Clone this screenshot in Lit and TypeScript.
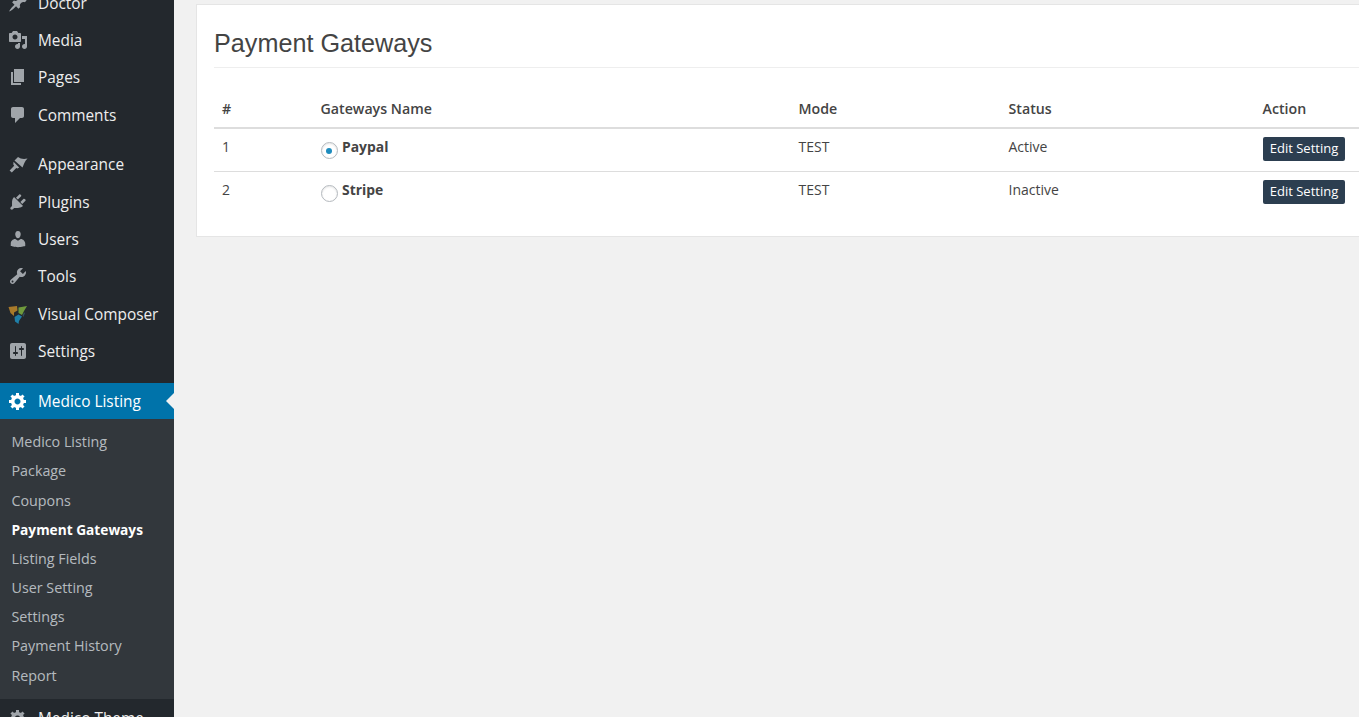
import { LitElement, html, css, svg } from 'lit';
import { customElement } from 'lit/decorators.js';

const ICONS: Record<string, string> = {
  pin: 'M10.44 3.02l1.82-1.82 6.36 6.35-1.83 1.82c-1.05-.68-2.48-.57-3.41.36l-.75.75c-.92.93-1.04 2.35-.35 3.41l-1.83 1.82-2.41-2.41-2.8 2.79c-.42.42-3.38 2.71-3.8 2.29s1.86-3.39 2.28-3.81l2.79-2.79L4.1 9.36l1.83-1.82c1.05.69 2.48.57 3.4-.36l.75-.75c.93-.92 1.05-2.35.36-3.41z',
  media: 'M13 11V4c0-.55-.45-1-1-1h-1.67L9 1H5L3.67 3H2c-.55 0-1 .45-1 1v7c0 .55.45 1 1 1h10c.55 0 1-.45 1-1zM7 4.5c1.38 0 2.5 1.12 2.5 2.5S8.38 9.5 7 9.5 4.5 8.38 4.5 7 5.62 4.5 7 4.5zM14 6h5v10.5c0 1.38-1.12 2.5-2.5 2.5S14 17.88 14 16.5s1.12-2.5 2.5-2.5c.17 0 .34.02.5.05V9h-3V6zm-4 8.05V13h2v3.5c0 1.38-1.12 2.5-2.5 2.5S7 17.88 7 16.5 8.12 14 9.5 14c.17 0 .34.02.5.05z',
  page: 'M6 15V2h10v13H6zm-1 1h8v2H3V5h2v11z',
  comment: 'M5 2h9c1.1 0 2 .9 2 2v7c0 1.1-.9 2-2 2h-2l-5 5v-5H5c-1.1 0-2-.9-2-2V4c0-1.1.9-2 2-2z',
  brush: 'M6.5 6.5L10 3c2.5 2 6 2.5 9.5 1.5-2.5 2.5-3 4.5-5 9zM5.5 7.8l5.7 5.7-1.7 1-1.2-.6-4.5 4.6-2.2-2 4.6-4.7-.9-1.4z',
  plug: 'M13.11 4.36L9.87 7.6 8 5.73l3.24-3.24c.35-.34 1.05-.2 1.56.32.52.51.66 1.21.31 1.55zm-8 1.77l.91-1.12 9.01 9.01-1.19.84c-.71.71-2.63 1.16-3.82 1.16H6.14L4.9 17.26c-.59.59-1.54.59-2.12 0-.59-.58-.59-1.53 0-2.12l1.24-1.24v-3.88c0-1.13.4-3.19 1.09-3.89zm7.26 3.97l3.24-3.24c.34-.35 1.04-.21 1.55.31.52.51.66 1.21.31 1.55l-3.24 3.25z',
  users: 'M10 9.25c-2.27 0-2.73-3.44-2.73-3.44C7 4.02 7.82 2 9.97 2c2.16 0 2.98 2.02 2.71 3.81 0 0-.41 3.44-2.68 3.44zm0 2.57L12.72 10c2.39 0 4.52 2.33 4.52 4.53v2.49s-3.65 1.13-7.24 1.13c-3.65 0-7.24-1.13-7.24-1.13v-2.49c0-2.25 1.94-4.48 4.47-4.48z',
  tools: 'M16.68 9.77c-1.34 1.34-3.3 1.67-4.95.99l-5.41 6.52c-.99.99-2.59.99-3.58 0s-.99-2.59 0-3.57l6.52-5.42c-.68-1.65-.35-3.61.99-4.95 1.28-1.28 3.12-1.62 4.72-1.06l-2.89 2.89 2.82 2.82 2.86-2.87c.53 1.58.18 3.39-1.08 4.65zM3.81 16.21c.4.39 1.04.39 1.43 0 .4-.4.4-1.04 0-1.43-.39-.4-1.03-.4-1.43 0-.39.39-.39 1.03 0 1.43z',
  settings: 'M18 16V4c0-1.1-.9-2-2-2H4c-1.1 0-2 .9-2 2v12c0 1.1.9 2 2 2h12c1.1 0 2-.9 2-2zM8 11h1c.55 0 1 .45 1 1s-.45 1-1 1H8v1.5c0 .28-.22.5-.5.5s-.5-.22-.5-.5V13H6c-.55 0-1-.45-1-1s.45-1 1-1h1V5.5c0-.28.22-.5.5-.5s.5.22.5.5V11zm5-2h-1c-.55 0-1-.45-1-1s.45-1 1-1h1V5.5c0-.28.22-.5.5-.5s.5.22.5.5V7h1c.55 0 1 .45 1 1s-.45 1-1 1h-1v5.5c0 .28-.22.5-.5.5s-.5-.22-.5-.5V9z',
  gear: 'M18 12h-2.18c-.17.7-.44 1.35-.81 1.93l1.54 1.54-2.1 2.1-1.54-1.54c-.58.36-1.23.63-1.91.79V19H8v-2.18c-.68-.16-1.33-.43-1.91-.79l-1.54 1.54-2.12-2.12 1.54-1.54c-.36-.58-.63-1.23-.79-1.91H1V9.03h2.17c.16-.7.44-1.35.8-1.94L2.43 5.55l2.1-2.1 1.54 1.54c.58-.37 1.24-.64 1.93-.81V2h3v2.18c.68.16 1.33.43 1.91.79l1.54-1.54 2.12 2.12-1.54 1.54c.36.59.64 1.24.8 1.94H18V12zm-8.5 1.5c1.66 0 3-1.34 3-3s-1.34-3-3-3-3 1.34-3 3 1.34 3 3 3z',
};

type MenuItem = { label: string; icon: string; gap?: boolean };

const topMenu: MenuItem[] = [
  { label: 'Doctor', icon: 'pin' },
  { label: 'Media', icon: 'media' },
  { label: 'Pages', icon: 'page' },
  { label: 'Comments', icon: 'comment' },
  { label: 'Appearance', icon: 'brush', gap: true },
  { label: 'Plugins', icon: 'plug' },
  { label: 'Users', icon: 'users' },
  { label: 'Tools', icon: 'tools' },
  { label: 'Visual Composer', icon: 'vc' },
  { label: 'Settings', icon: 'settings' },
];

const subMenu = [
  'Medico Listing',
  'Package',
  'Coupons',
  'Payment Gateways',
  'Listing Fields',
  'User Setting',
  'Settings',
  'Payment History',
  'Report',
];

const gateways = [
  { id: 1, name: 'Paypal', mode: 'TEST', status: 'Active', on: true },
  { id: 2, name: 'Stripe', mode: 'TEST', status: 'Inactive', on: false },
];

function icon(name: string) {
  if (name === 'vc') {
    return html`<svg class="icon" viewBox="0 0 20 20">
      ${svg`<path fill="#a87a2a" d="M.5 3L9 2l.5 4.500-3.500 2V12L2.500 9z" />
        <path fill="#6f9a3c" d="M10.500 3.500L19 2l-3 5-2 4-3.500-2z" />
        <path fill="#1f7fa8" d="M6.500 13l4-2.500 3.500 2-3 4.500-.5 3-3.500-2.500z" />
        <path fill="#34505c" d="M14.500 11.500L16 8.500l1 .5-1.500 4z" />`}
    </svg>`;
  }
  return html`<svg class="icon" viewBox="0 0 20 20">${svg`<path d=${ICONS[name]} />`}</svg>`;
}

@customElement('app-root')
export class AppRoot extends LitElement {
  static styles = css`
    :host {
      display: flex;
      height: 717px;
      overflow: hidden;
      background: #f1f1f1;
      font-family: 'Open Sans', sans-serif;
      color: #444;
    }
    .sidebar {
      flex: 0 0 174px;
      height: 717px;
      overflow: hidden;
      background: #23282d;
    }
    .menu {
      margin-top: -16.3px;
    }
    .item {
      display: flex;
      align-items: center;
      box-sizing: border-box;
      height: 37.4px;
      padding-top: 1.5px;
      font-size: 15.4px;
      color: #eee;
      white-space: nowrap;
    }
    .item .icon {
      margin-top: -1px;
    }
    .item.gap {
      margin-top: 12px;
    }
    .icon {
      flex: 0 0 20px;
      width: 20px;
      height: 20px;
      margin: 0 10px 0 8px;
      fill: #a0a5aa;
    }
    .current {
      position: relative;
      height: 36px;
      margin-top: 13.3px;
      background: #0073aa;
      color: #fff;
    }
    .current .icon {
      fill: #fff;
    }
    .current::after {
      content: '';
      position: absolute;
      right: 0;
      top: 10px;
      border: 8px solid transparent;
      border-left: 0;
      border-right-color: #f1f1f1;
    }
    .sub {
      height: 280px;
      box-sizing: border-box;
      padding-top: 8.25px;
      background: #32373c;
    }
    .sub div {
      height: 29.2px;
      line-height: 29.2px;
      padding-left: 11.5px;
      font-size: 14.3px;
      color: rgba(240, 245, 250, 0.7);
      white-space: nowrap;
    }
    .sub div.on {
      color: #fff;
      font-weight: 700;
      font-size: 13.7px;
    }
    main {
      flex: 1;
      min-width: 0;
      overflow: hidden;
      padding: 4px 0 0 22px;
    }
    .card {
      box-sizing: border-box;
      width: 1240px;
      height: 233px;
      padding: 0 17px;
      background: #fff;
      border: 1px solid #e5e5e5;
    }
    h1 {
      margin: 0;
      height: 63px;
      box-sizing: border-box;
      padding-top: 22px;
      border-bottom: 1px solid #eee;
      font: 400 25.2px/32px 'Liberation Sans', sans-serif;
      color: #444;
    }
    table {
      table-layout: fixed;
      width: 1204px;
      margin-top: 21px;
      border-collapse: collapse;
      font-size: 14px;
    }
    th {
      height: 38px;
      padding: 0 8px 0 7.5px;
      text-align: left;
      font-weight: 600;
      font-size: 14.2px;
      border-bottom: 2px solid #ddd;
    }
    th:first-child {
      padding-left: 8px;
    }
    td {
      height: 43px;
      box-sizing: border-box;
      padding: 8px 8px 0 7.5px;
      vertical-align: top;
      line-height: 20px;
    }
    td:first-child {
      padding-left: 8px;
    }
    tr + tr td {
      border-top: 1px solid #ddd;
    }
    .radio {
      display: inline-block;
      box-sizing: border-box;
      width: 17px;
      height: 17px;
      margin: 0 4.5px 0 0;
      vertical-align: -7px;
      border: 1px solid #b4b9be;
      border-radius: 50%;
      background: #fff;
      box-shadow: inset 0 1px 2px rgba(0, 0, 0, 0.1);
      position: relative;
    }
    .radio.on::after {
      content: '';
      position: absolute;
      left: 4.5px;
      top: 4.5px;
      width: 6px;
      height: 6px;
      border-radius: 50%;
      background: #1e8cbe;
    }
    b {
      font-weight: 700;
      font-size: 13.9px;
    }
    button {
      display: block;
      box-sizing: border-box;
      width: 82px;
      height: 24px;
      margin-left: 0.5px;
      padding: 0 0 2px;
      border: 0;
      border-radius: 2px;
      background: #2c3e50;
      color: #fff;
      font: 400 13px 'Open Sans', sans-serif;
    }
  `;

  render() {
    return html`
      <aside class="sidebar">
        <div class="menu">
          ${topMenu.map(
            (m) => html`<div class="item ${m.gap ? 'gap' : ''}">${icon(m.icon)}${m.label}</div>`,
          )}
          <div class="item current">${icon('gear')}Medico Listing</div>
          <div class="sub">
            ${subMenu.map(
              (s) => html`<div class=${s === 'Payment Gateways' ? 'on' : ''}>${s}</div>`,
            )}
          </div>
          <div class="item">${icon('gear')}Medico Theme</div>
        </div>
      </aside>
      <main>
        <section class="card">
          <h1>Payment Gateways</h1>
          <table>
            <colgroup>
              <col style="width:99px" />
              <col style="width:478px" />
              <col style="width:210px" />
              <col style="width:254px" />
              <col />
            </colgroup>
            <thead>
              <tr>
                <th>#</th>
                <th>Gateways Name</th>
                <th>Mode</th>
                <th>Status</th>
                <th>Action</th>
              </tr>
            </thead>
            <tbody>
              ${gateways.map(
                (g) => html`<tr>
                  <td>${g.id}</td>
                  <td><span class="radio ${g.on ? 'on' : ''}"></span><b>${g.name}</b></td>
                  <td>${g.mode}</td>
                  <td>${g.status}</td>
                  <td><button>Edit Setting</button></td>
                </tr>`,
              )}
            </tbody>
          </table>
        </section>
      </main>
    `;
  }
}
